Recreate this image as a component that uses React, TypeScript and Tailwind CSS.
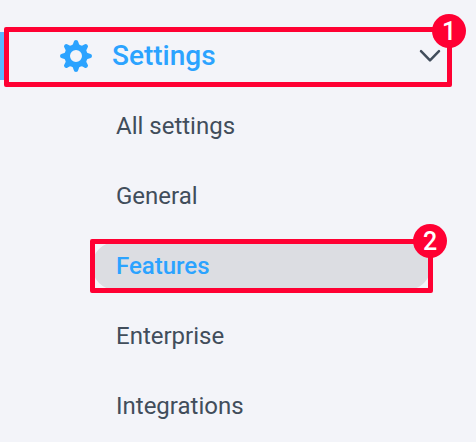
import React from 'react';

interface MenuItem {
    label: string;
    active?: boolean;
}

const items: MenuItem[] = [
    { label: 'All settings' },
    { label: 'General' },
    { label: 'Features', active: true },
    { label: 'Enterprise' },
    { label: 'Integrations' },
];

const teeth = [0, 45, 90, 135, 180, 225, 270, 315];

const GearIcon: React.FC = () => (
    <svg width="32" height="32" viewBox="-16 -16 32 32" className="shrink-0" aria-hidden="true">
        <circle r="8.7" fill="none" stroke="#2ba3ff" strokeWidth="5.4" />
        {teeth.map((angle) => (
            <path
                key={angle}
                d="M-4.8 -9.8 Q-2.7 -11.2 -2.3 -14 Q-2 -16 0 -16 Q2 -16 2.3 -14 Q2.7 -11.2 4.8 -9.8 Z"
                fill="#2ba3ff"
                transform={`rotate(${angle})`}
            />
        ))}
    </svg>
);

const ChevronIcon: React.FC = () => (
    <svg width="22" height="14" viewBox="0 0 22 14" className="shrink-0" aria-hidden="true">
        <path d="M2 2.2 L11 11.4 L20 2.2" fill="none" stroke="#414d5b" strokeWidth="2.5" strokeLinecap="round" strokeLinejoin="round" />
    </svg>
);

const Badge: React.FC<{ value: number; className: string }> = ({ value, className }) => (
    <span className={`absolute -right-[19px] flex h-[34px] w-[34px] items-center justify-center rounded-full bg-[#ff0033] text-[25px] leading-none font-medium text-white ${className}`}>
        {value}
    </span>
);

const App: React.FC = () => {
    return (
        <nav className="flex h-[442px] w-[476px] flex-col gap-[22px] overflow-hidden bg-[#f3f4f9] pt-8 font-[Roboto,sans-serif]">
            {/* Section header */}
            <div className="relative flex h-12 shrink-0 items-center gap-5 border-l-[5px] border-[#5ab7ff] pr-[35.5px] pl-[55px]">
                <GearIcon />
                <span className="grow text-[28px] leading-8 font-medium text-[#2ba3ff]">Settings</span>
                <ChevronIcon />
                <div className="absolute -top-[5.5px] -left-[1.5px] h-[60px] w-[448.5px] rounded-[2px] border-[5px] border-[#ff0033]">
                    <Badge value={1} className="-top-[17.5px]" />
                </div>
            </div>

            {/* Submenu */}
            <ul className="flex flex-col gap-[22px] pr-[45px] pl-[92px]">
                {items.map((item) => (
                    <li
                        key={item.label}
                        className={`relative flex h-12 items-center rounded-full pl-6 text-2xl leading-8 ${item.active ? 'bg-[#dcdde2] font-medium text-[#2ba3ff]' : 'text-[#414d5b]'}`}
                    >
                        {item.label}
                        {item.active && (
                            <div className="absolute -top-[3.5px] -left-[2.5px] h-[54px] w-[343.5px] rounded-[2px] border-[5px] border-[#ff0033]">
                                <Badge value={2} className="-top-[19.5px]" />
                            </div>
                        )}
                    </li>
                ))}
            </ul>
        </nav>
    );
};

export default App;
